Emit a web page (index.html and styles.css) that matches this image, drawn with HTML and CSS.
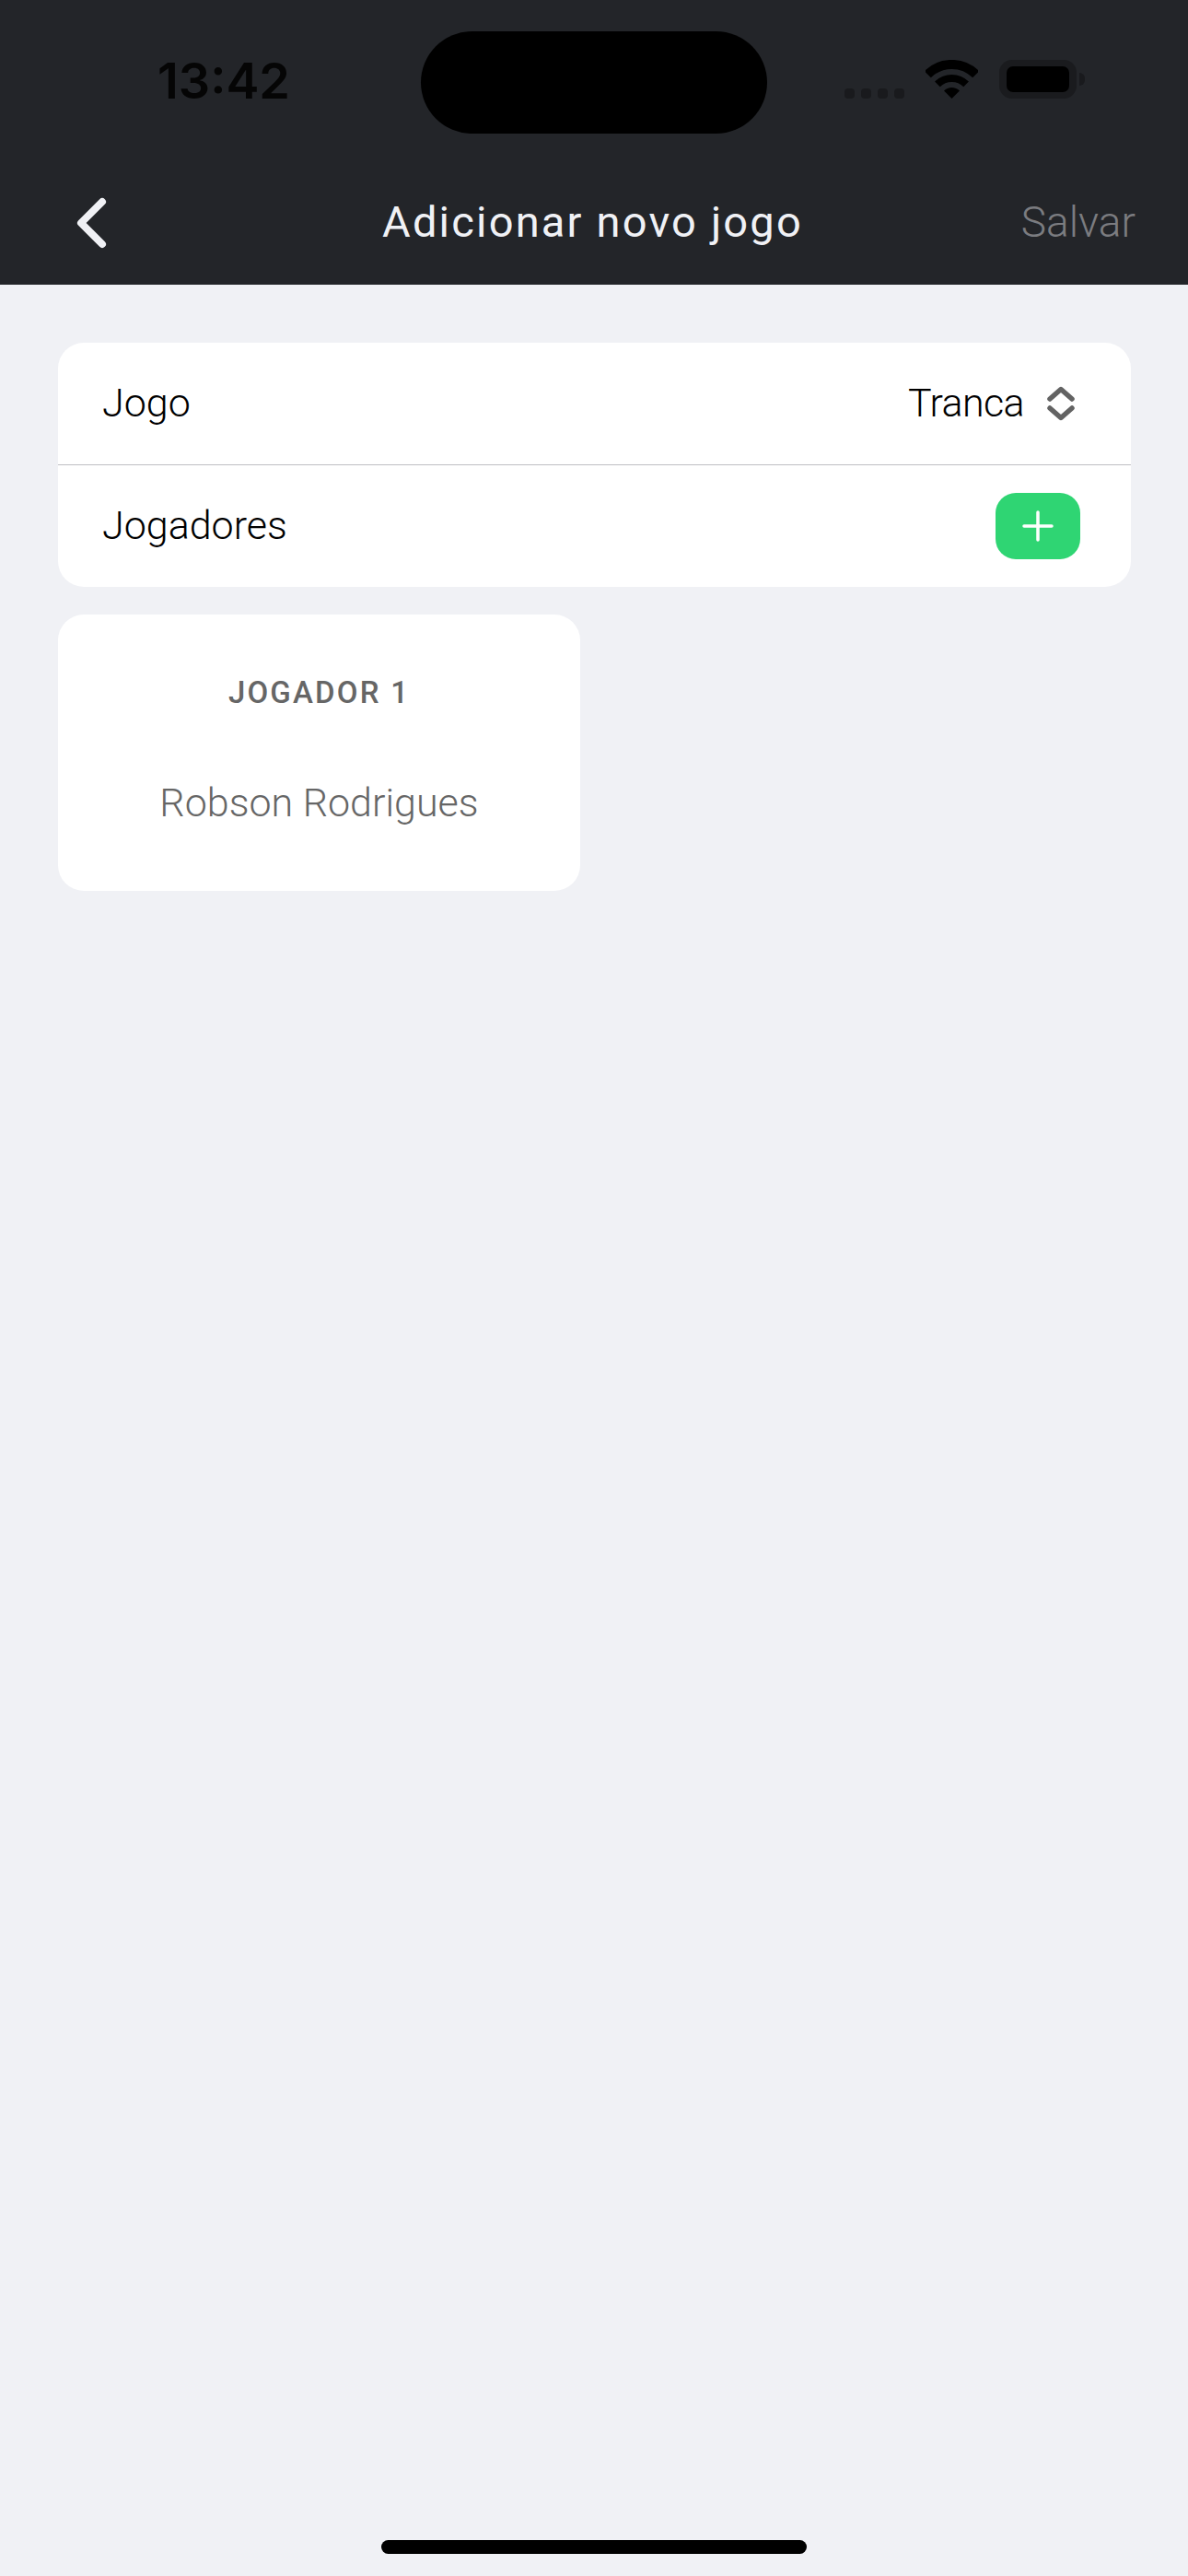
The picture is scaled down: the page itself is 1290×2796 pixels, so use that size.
FILE: index.html
```html
<!DOCTYPE html>
<html lang="en">
<head>
    <meta charset="UTF-8">
    <meta name="viewport" content="width=device-width, initial-scale=1.0">
    <title>Adicionar novo jogo</title>
    <link rel="stylesheet" href="styles.css">
</head>
<body>
    <div id="screen">
        <header id="top">
            <div id="status-bar">
                <span id="clock">13:42</span>
                <div id="island"></div>
                <div id="status-icons">
                    <div id="signal">
                        <span class="dot"></span>
                        <span class="dot"></span>
                        <span class="dot"></span>
                        <span class="dot"></span>
                    </div>
                    <svg width="57" height="42" viewBox="0 0 57 42">
                        <path d="M2.3 15.8 A37 37 0 0 1 54.7 15.8" fill="none" stroke="#000" stroke-width="10"/>
                        <path d="M12.9 26.4 A22 22 0 0 1 44.1 26.4" fill="none" stroke="#000" stroke-width="8"/>
                        <path d="M28.5 42 L20 33.5 A12 12 0 0 1 37 33.5 Z" fill="#000"/>
                    </svg>
                    <div id="battery">
                        <div id="battery-body"><div id="battery-level"></div></div>
                        <div id="battery-nub"></div>
                    </div>
                </div>
            </div>
            <nav id="nav">
                <svg class="back" width="34" height="56" viewBox="0 0 34 56">
                    <path d="M29 5 L6 28 L29 51" fill="none" stroke="#f0f1f5" stroke-width="8" stroke-linecap="round" stroke-linejoin="round"/>
                </svg>
                <h1 id="title">Adicionar novo jogo</h1>
                <a id="save">Salvar</a>
            </nav>
        </header>

        <main id="content">
            <section class="card form">
                <div class="row">
                    <span class="label">Jogo</span>
                    <div class="select">
                        <span class="label">Tranca</span>
                        <svg width="30" height="38" viewBox="0 0 30 38">
                            <path d="M3 14 L15 3.500 L27 14" fill="none" stroke="#636363" stroke-width="5.500" stroke-linecap="round" stroke-linejoin="round"/>
                            <path d="M3 24 L15 34.500 L27 24" fill="none" stroke="#636363" stroke-width="5.500" stroke-linecap="round" stroke-linejoin="round"/>
                        </svg>
                    </div>
                </div>
                <div class="row">
                    <span class="label">Jogadores</span>
                    <button id="add-button">
                        <svg width="34" height="34" viewBox="0 0 34 34">
                            <path d="M17 2 V32 M2 17 H32" fill="none" stroke="#fff" stroke-width="3.500" stroke-linecap="round"/>
                        </svg>
                    </button>
                </div>
            </section>

            <section class="card player">
                <p class="player-number">JOGADOR 1</p>
                <p class="player-name">Robson Rodrigues</p>
            </section>
        </main>

        <div id="home-bar"></div>
    </div>
</body>
</html>
```

FILE: styles.css
```css
body{
    margin: 0;
    padding: 0;
    background-color: #f0f1f5;
    font-family: Roboto, Arial, sans-serif;
}

p, h1{
    margin: 0;
}

#screen{
    display: flex;
    flex-direction: column;
    width: 1290px;
    height: 2796px;
    overflow: hidden;
}

#top{
    height: 309px;
    background-color: #232529;
}

#status-bar{
    position: relative;
    display: flex;
    justify-content: space-between;
    height: 190px;
    padding: 65px 112px 0 171px;
    box-sizing: border-box;
}

#clock{
    font-family: Inter, Arial, sans-serif;
    font-size: 54px;
    font-weight: 600;
    line-height: 46px;
    color: #050505;
}

#island{
    position: absolute;
    top: 34px;
    left: 457px;
    width: 376px;
    height: 111px;
    border-radius: 56px;
    background-color: #000000;
}

#status-icons{
    display: flex;
    align-items: flex-end;
    gap: 23px;
    height: 42px;
}

#signal{
    display: flex;
    gap: 7px;
}

.dot{
    width: 11px;
    height: 11px;
    border-radius: 4px;
    background-color: #191a1d;
}

#battery{
    display: flex;
    align-items: center;
    gap: 3px;
}

#battery-body{
    width: 84px;
    height: 42px;
    padding: 7px 8px;
    border-radius: 14px;
    box-sizing: border-box;
    background-color: #1a1b1e;
}

#battery-level{
    height: 100%;
    border-radius: 7px;
    background-color: #000000;
}

#battery-nub{
    width: 6px;
    height: 14px;
    border-radius: 0 6px 6px 0;
    background-color: #191a1d;
}

#nav{
    display: grid;
    grid-template-columns: 1fr auto 1fr;
    align-items: center;
    height: 104px;
    padding: 0 57px 0 54px;
}

.back{
    margin-left: 28px;
}

#title{
    margin-bottom: 3px;
    font-size: 47px;
    font-weight: 400;
    letter-spacing: 2.200px;
    color: #f0f1f5;
}

#save{
    justify-self: end;
    margin-bottom: 3px;
    font-size: 46px;
    font-weight: 300;
    color: #7b7c80;
}

#content{
    display: flex;
    flex-direction: column;
    flex: 1;
    gap: 30px;
    padding: 63px 62px 0 63px;
}

.card{
    border-radius: 28px;
    background-color: #ffffff;
}

.row{
    display: flex;
    align-items: center;
    justify-content: space-between;
    height: 132px;
    padding: 0 55px 0 48px;
}

.row + .row{
    border-top: solid #bfbfc3 1px;
    height: 133px;
    box-sizing: border-box;
}

.label{
    margin-bottom: 2px;
    font-size: 43px;
    font-weight: 300;
    color: #000000;
}

.select{
    display: flex;
    align-items: center;
    gap: 25px;
    margin-right: 6px;
}

.select .label{
    letter-spacing: -0.600px;
}

#add-button{
    display: flex;
    align-items: center;
    justify-content: center;
    width: 92px;
    height: 72px;
    padding: 0;
    border: none;
    border-radius: 22px;
    background-color: #2fd573;
}

.player{
    display: flex;
    flex-direction: column;
    align-items: center;
    gap: 75px;
    width: 567px;
    height: 300px;
    padding-top: 65px;
    box-sizing: border-box;
}

.player-number{
    font-size: 33px;
    font-weight: 500;
    letter-spacing: 2.200px;
    color: #666666;
}

.player-name{
    font-size: 43px;
    font-weight: 300;
    color: #666666;
}

#home-bar{
    width: 462px;
    height: 15px;
    margin: 0 auto 24px;
    border-radius: 8px;
    background-color: #000000;
}
```
